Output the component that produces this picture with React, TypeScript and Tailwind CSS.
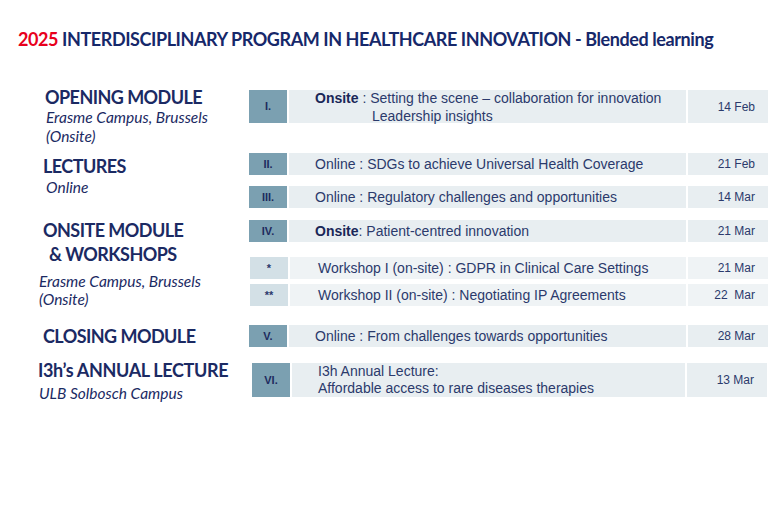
type Row = {
  badge: string
  light?: boolean
  date: string
  content: React.ReactNode
  mt: string
  h: string
  pl?: string
  shift?: string
}

const rows: Row[] = [
  {
    badge: "I.",
    date: "14 Feb",
    mt: "mt-0",
    h: "h-[33px]",
    content: (
      <div className="leading-[18px]">
        <div>
          <span className="font-bold text-[#1a2758]">Onsite</span> : Setting the scene – collaboration for innovation
        </div>
        <div className="pl-[57px]">Leadership insights</div>
      </div>
    ),
  },
  { badge: "II.", date: "21 Feb", mt: "mt-[30px]", h: "h-[22px]", content: "Online : SDGs to achieve Universal Health Coverage" },
  { badge: "III.", date: "14 Mar", mt: "mt-[11px]", h: "h-[22px]", content: "Online : Regulatory challenges and opportunities" },
  {
    badge: "IV.",
    date: "21 Mar",
    mt: "mt-[12px]",
    h: "h-[22px]",
    content: (
      <span>
        <span className="font-bold text-[#1a2758]">Onsite</span>: Patient-centred innovation
      </span>
    ),
  },
  { badge: "*", light: true, date: "21 Mar", mt: "mt-[15px]", h: "h-[22px]", pl: "pl-[28px]", shift: "ml-[1px]", content: "Workshop I (on-site) : GDPR in Clinical Care Settings" },
  { badge: "**", light: true, date: "22  Mar", mt: "mt-[5px]", h: "h-[22px]", pl: "pl-[28px]", shift: "ml-[1px]", content: "Workshop II (on-site) : Negotiating IP Agreements" },
  { badge: "V.", date: "28 Mar", mt: "mt-[19px]", h: "h-[22px]", content: "Online : From challenges towards opportunities" },
  {
    badge: "VI.",
    date: "13 Mar",
    mt: "mt-[16px]",
    h: "h-[34px]",
    pl: "pl-[26px]",
    shift: "ml-[3px] mr-[1px]",
    content: (
      <div className="leading-[17px]">
        <div>I3h Annual Lecture:</div>
        <div>Affordable access to rare diseases therapies</div>
      </div>
    ),
  },
]

export default function App() {
  return (
    <div className="w-[768px] h-[532px] bg-white overflow-hidden font-['Lato',sans-serif]">
      {/* Title */}
      <h1 className="pt-[27px] pl-[18px] text-[18px] leading-[24px] font-bold tracking-[-0.42px] text-[#16286a] whitespace-nowrap">
        <span className="text-[#e8001c]">2025</span> INTERDISCIPLINARY PROGRAM IN HEALTHCARE INNOVATION - Blended learning
      </h1>

      <div className="mt-[35px] flex">
        {/* Left - modules */}
        <div className="w-[249px] shrink-0 flex flex-col text-[#1b2a63] whitespace-nowrap">
          <div className="pl-[45px] text-[18px] leading-[22px] font-bold tracking-[-0.55px]">OPENING MODULE</div>
          <div className="pl-[46px] text-[15.5px] leading-[19px] italic">
            Erasme Campus, Brussels
            <br />
            (Onsite)
          </div>
          <div className="mt-[9px] pl-[43px] text-[18px] leading-[22px] font-bold tracking-[-0.55px]">LECTURES</div>
          <div className="mt-[1px] pl-[46px] text-[15.5px] leading-[19px] italic">Online</div>
          <div className="mt-[21px] pl-[43px] text-[18px] leading-[24px] font-bold tracking-[-0.55px]">
            ONSITE MODULE
            <br />
            <span className="pl-[6px]">&amp; WORKSHOPS</span>
          </div>
          <div className="mt-[6px] pl-[39px] text-[15.5px] leading-[18px] italic">
            Erasme Campus, Brussels
            <br />
            (Onsite)
          </div>
          <div className="mt-[17px] pl-[43px] text-[18px] leading-[22px] font-bold tracking-[-0.55px]">CLOSING MODULE</div>
          <div className="mt-[12px] pl-[38px] text-[18px] leading-[22px] font-bold tracking-[-0.35px]">I3h’s ANNUAL LECTURE</div>
          <div className="mt-[3px] pl-[39px] text-[15.5px] leading-[19px] italic">ULB Solbosch Campus</div>
        </div>

        {/* Right - schedule */}
        <div className="flex-1 flex flex-col pt-[4px] font-['Liberation_Sans',Arial,sans-serif] text-[#2b3a6c]">
          {rows.map((r) => (
            <div key={r.badge} className={`flex gap-[2px] ${r.mt} ${r.h} ${r.shift ?? ""}`}>
              <div
                className={`w-[38px] shrink-0 flex items-center justify-center text-[11px] font-bold ${
                  r.light ? "bg-[#d3e0e6] text-[#2b3a6c]" : "bg-[#7ba0b1] text-[#1e2b5e]"
                }`}
              >
                {r.badge}
              </div>
              <div
                className={`flex-1 flex items-center text-[14px] whitespace-nowrap ${r.pl ?? "pl-[26px]"} ${
                  r.light ? "bg-[#eff3f5]" : "bg-[#e8eef1]"
                }`}
              >
                {r.content}
              </div>
              <div
                className={`w-[80px] shrink-0 flex items-center justify-end pr-[13px] text-[12px] whitespace-pre ${
                  r.light ? "bg-[#eff3f5]" : "bg-[#e8eef1]"
                }`}
              >
                {r.date}
              </div>
            </div>
          ))}
        </div>
      </div>
    </div>
  )
}
